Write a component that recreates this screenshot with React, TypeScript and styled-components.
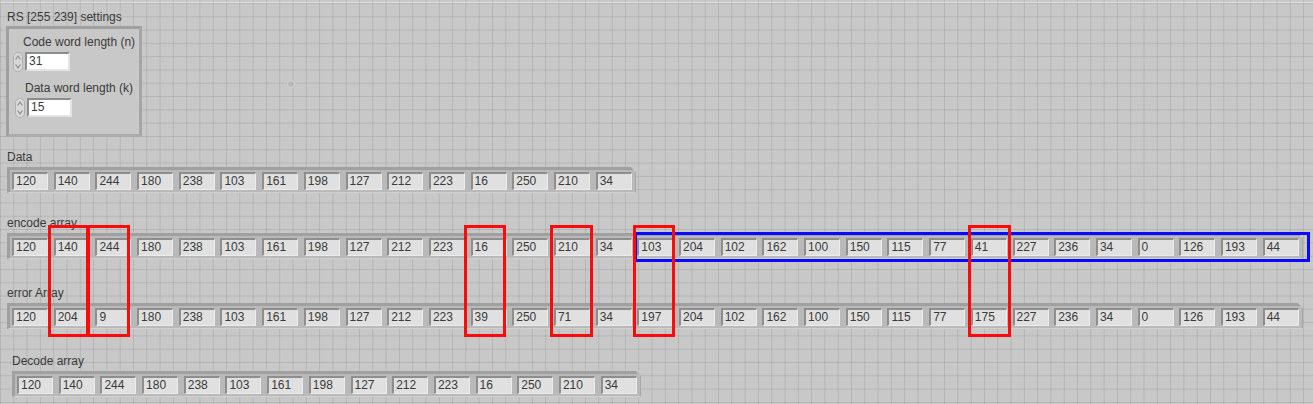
import React from "react";
import styled, { createGlobalStyle } from "styled-components";

const DATA = [120, 140, 244, 180, 238, 103, 161, 198, 127, 212, 223, 16, 250, 210, 34];
const PARITY = [103, 204, 102, 162, 100, 150, 115, 77, 41, 227, 236, 34, 0, 126, 193, 44];
const ENCODED = [...DATA, ...PARITY];
const RECEIVED = [
  120, 204, 9, 180, 238, 103, 161, 198, 127, 212, 223, 39, 250, 71, 34,
  197, 204, 102, 162, 100, 150, 115, 77, 175, 227, 236, 34, 0, 126, 193, 44,
];

// hand-drawn highlights around the corrupted symbols
const MARKS = [
  { x: 48, w: 41 },
  { x: 87, w: 43 },
  { x: 464, w: 42 },
  { x: 550, w: 43 },
  { x: 633, w: 42 },
  { x: 968, w: 43 },
];

const GlobalStyle = createGlobalStyle`
  html, body {
    margin: 0;
    padding: 0;
    background: #c9c9c9;
  }
`;

const Spinner = () => (
  <svg width="10" height="20" viewBox="0 0 10 20">
    <rect x="0.5" y="0.5" width="9" height="19" rx="4.5" fill="#d8d8d8" stroke="#b0b0b0" />
    <path d="M2.6 7.5 L5 4 L7.4 7.5" fill="none" stroke="#8e8e8e" strokeWidth="1.2" />
    <path d="M2.6 12.5 L5 16 L7.4 12.5" fill="none" stroke="#8e8e8e" strokeWidth="1.2" />
  </svg>
);

const NumField = ({ label, value, indent = 0 }: { label: string; value: string; indent?: number }) => (
  <Field indent={indent}>
    <FieldLabel>{label}</FieldLabel>
    <FieldRow>
      <Spinner />
      <NumBox>{value}</NumBox>
    </FieldRow>
  </Field>
);

const ArraySection = ({
  label,
  values,
  mt,
  ml = 0,
}: {
  label: string;
  values: number[];
  mt: number;
  ml?: number;
}) => (
  <Section mt={mt} ml={ml}>
    <SectionLabel>{label}</SectionLabel>
    <Frame>
      {values.map((v, i) => (
        <Cell key={i}>{v}</Cell>
      ))}
    </Frame>
  </Section>
);

const App = () => {
  return (
    <Panel>
      <GlobalStyle />
      <TopRule />
      <Title>RS [255 239] settings</Title>
      <Cluster>
        <NumField label="Code word length (n)" value="31" />
        <NumField label="Data word length (k)" value="15" indent={2} />
      </Cluster>
      <Pin />

      <ArraySection label="Data" values={DATA} mt={13} ml={7} />

      <Marked>
        <ArraySection label="encode array" values={ENCODED} mt={0} ml={7} />
        <ArraySection label="error Array" values={RECEIVED} mt={27} ml={7} />
        <BlueBox />
        {MARKS.map((m) => (
          <RedBox key={m.x} style={{ left: m.x, width: m.w }} />
        ))}
      </Marked>

      <ArraySection label="Decode array" values={DATA} mt={25} ml={12} />
    </Panel>
  );
};

export default App;

const Panel = styled.div`
  position: relative;
  width: 1313px;
  height: 404px;
  overflow: hidden;
  display: flex;
  flex-direction: column;
  align-items: flex-start;
  background-color: #c8c8c8;
  background-image: linear-gradient(90deg, rgba(0, 0, 0, 0.095) 1px, transparent 1px),
    linear-gradient(rgba(0, 0, 0, 0.095) 1px, transparent 1px);
  background-size: 13.3px 13.3px;
  background-position: 0 3px;
  font-family: "Liberation Sans", Arial, sans-serif;
  font-size: 12px;
  line-height: 14px;
  color: #3a3a3a;
`;

const TopRule = styled.div`
  align-self: stretch;
  height: 1px;
  margin-top: 2px;
  background: #e2e2e2;
`;

const Title = styled.div`
  margin: 7px 0 0 7px;
`;

const Cluster = styled.div`
  box-sizing: border-box;
  width: 136px;
  height: 111px;
  margin: 2px 0 0 6px;
  padding: 6px 0 0 4px;
  display: flex;
  flex-direction: column;
  background: #c8c8c8;
  border: 3px solid;
  border-color: #a0a0a0 #a6a6a6 #acacac #a0a0a0;
`;

const Field = styled.div<{ indent: number }>`
  display: flex;
  flex-direction: column;
  margin-left: ${(p) => p.indent}px;
  & + & {
    margin-top: 10px;
  }
`;

const FieldLabel = styled.div`
  margin-left: 10px;
`;

const FieldRow = styled.div`
  display: flex;
  align-items: center;
  gap: 2px;
  margin-top: 3px;
  height: 19px;
`;

const NumBox = styled.div`
  box-sizing: border-box;
  width: 45px;
  height: 19px;
  padding-left: 2px;
  line-height: 15px;
  background: #fff;
  border: 2px solid;
  border-color: #8c8c8c #e4e4e4 #e4e4e4 #8c8c8c;
`;

const Pin = styled.div`
  position: absolute;
  left: 287px;
  top: 80px;
  width: 6px;
  height: 6px;
  border-radius: 50%;
  background: #b8b8b8;
  border: 1px solid #d4d4d4;
`;

const Section = styled.div<{ mt: number; ml: number }>`
  display: flex;
  flex-direction: column;
  align-items: flex-start;
  margin-top: ${(p) => p.mt}px;
  margin-left: ${(p) => p.ml}px;
`;

const SectionLabel = styled.div`
  margin-bottom: 3px;
`;

const Frame = styled.div`
  display: flex;
  gap: 5.7px;
  padding: 2px 3px 2px 2px;
  background: #b9b9b9;
  border-top: 3px solid #a0a0a0;
  border-left: 3px solid #a0a0a0;
  border-bottom: 1px solid #d0d0d0;
  border-right: 1px solid #9c9c9c;
  clip-path: polygon(0 0, calc(100% - 5px) 0, 100% 5px, 100% 100%, 0 100%);
`;

const Cell = styled.div`
  box-sizing: border-box;
  width: 36px;
  height: 18px;
  padding-left: 2px;
  line-height: 15px;
  background: #e0e0e0;
  border-left: 2px solid #8e8e8e;
  border-top: 2px solid #8e8e8e;
  border-right: 1px solid #ececec;
  border-bottom: 1px solid #ececec;
  color: #3a3a3a;
`;

const Marked = styled.div`
  position: relative;
  align-self: stretch;
  display: flex;
  flex-direction: column;
  align-items: flex-start;
  margin-top: 23px;
`;

const BlueBox = styled.div`
  position: absolute;
  box-sizing: border-box;
  left: 634px;
  top: 16px;
  width: 676px;
  height: 30px;
  border: 3px solid #0a0aff;
`;

const RedBox = styled.div`
  position: absolute;
  box-sizing: border-box;
  top: 9px;
  height: 112px;
  border: 3px solid #ff0a0a;
`;
